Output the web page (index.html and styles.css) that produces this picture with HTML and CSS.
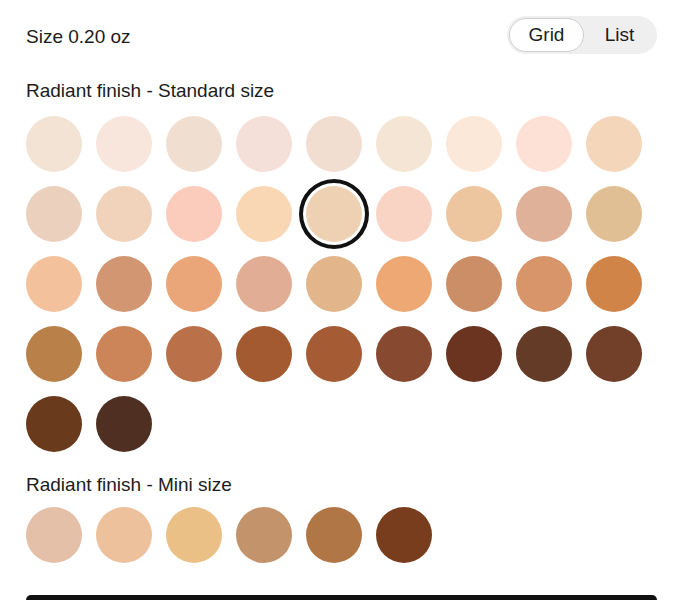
FILE: index.html
```html
<!DOCTYPE html>
<html lang="en">
<head>
    <meta charset="UTF-8">
    <meta name="viewport" content="width=device-width, initial-scale=1.0">
    <title>Shades</title>
    <link rel="stylesheet" href="styles.css">
</head>
<body>
    <div class="page">
        <div class="top-row">
            <span class="size-label">Size 0.20 oz</span>
            <div class="view-toggle">
                <button class="toggle-btn active">Grid</button>
                <button class="toggle-btn">List</button>
            </div>
        </div>

        <h2 class="group-title">Radiant finish - Standard size</h2>
        <div class="shades" id="standardShades"></div>

        <h2 class="group-title mini">Radiant finish - Mini size</h2>
        <div class="shades mini" id="miniShades"></div>

        <button class="add-btn" aria-label="Add to bag"></button>
    </div>

    <script src="script.js"></script>
</body>
</html>
```

FILE: script.js
```js
const standardShades = [
    "#f3e3d4", "#f8e6dc", "#f0dfd0", "#f4e0d9", "#f1ded0", "#f5e5d4", "#fbe8d8", "#fde1d7", "#f4d6bb",
    "#ecd0be", "#f1d3bb", "#fbcbbc", "#f9d7b5", "#edd1b2", "#f9d4c4", "#edc69f", "#dfb199", "#e0bf94",
    "#f3c29d", "#d39672", "#eaa678", "#e1ae95", "#e2b58a", "#eda873", "#cc8e66", "#d8956a", "#d08447",
    "#b98049", "#cc8558", "#ba7049", "#a35a30", "#a55b33", "#874a31", "#6a3420", "#633b27", "#723f29",
    "#6a3a1d", "#4e2f22"
];

const miniShades = ["#e5c0a8", "#ecc19b", "#ebc087", "#c3936b", "#b17645", "#773d1c"];

const selectedIndex = 13; // second row, fifth shade

function fillShades(containerId, colors, selected) {
    const container = document.getElementById(containerId);
    colors.forEach((color, i) => {
        const swatch = document.createElement("button");
        swatch.className = "swatch" + (i === selected ? " selected" : "");
        swatch.style.backgroundColor = color;
        container.appendChild(swatch);
    });
}

fillShades("standardShades", standardShades, selectedIndex);
fillShades("miniShades", miniShades, -1);
```

FILE: styles.css
```css
html, body {
    margin: 0;
    padding: 0;
    background-color: #fff;
    overflow: hidden;
}

body {
    font-family: "Liberation Sans", Helvetica, Arial, sans-serif;
    font-size: 19px;
    color: #1c1c1c;
}

.page {
    padding: 16px 26px 0;
}

.top-row {
    display: flex;
    justify-content: space-between;
    align-items: center;
    height: 38px;
}

.size-label {
    padding-top: 3px;
}

.view-toggle {
    display: flex;
    align-items: center;
    background-color: #efefef;
    border-radius: 19px;
    height: 38px;
    padding: 0 2px;
}

.toggle-btn {
    font-family: inherit;
    font-size: 19px;
    color: #1c1c1c;
    background: none;
    border: none;
    height: 34px;
    padding: 0;
    width: 71px;
    border-radius: 17px;
    cursor: pointer;
}

.toggle-btn.active {
    width: 75px;
    background-color: #fff;
    border: 1.5px solid #cfcfcf;
}

.group-title {
    font-size: 19px;
    font-weight: normal;
    line-height: 22px;
    margin: 26px 0 14px;
}

.group-title.mini {
    margin: 22px 0 11px;
}

.shades {
    display: grid;
    grid-template-columns: repeat(9, 56px);
    gap: 14px;
}

.swatch {
    width: 56px;
    height: 56px;
    border-radius: 50%;
    border: none;
    padding: 0;
    cursor: pointer;
}

.swatch.selected {
    box-shadow: 0 0 0 3px #fff, 0 0 0 7px #111;
}

.add-btn {
    display: block;
    width: 100%;
    height: 52px;
    margin-top: 32px;
    border: none;
    border-radius: 5px;
    background-color: #111;
}
```
